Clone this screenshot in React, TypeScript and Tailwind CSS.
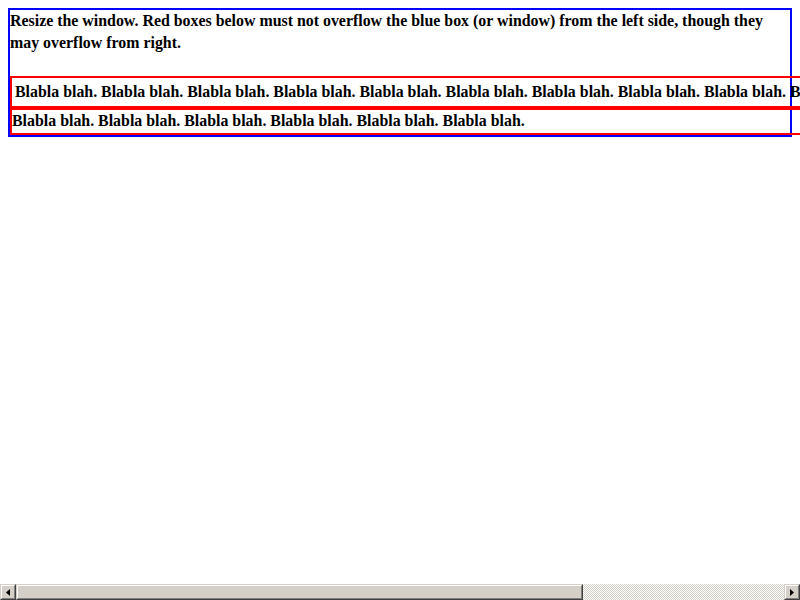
import React from "react";

const blah = (n: number) => Array.from({ length: n }, () => "Blabla blah.").join(" ");

function ScrollButton({ dir }: { dir: "left" | "right" }) {
  return (
    <div className="w-4 h-4 shrink-0 bg-[#d4d0c8] border border-t-[#d4d0c8] border-l-[#d4d0c8] border-r-[#404040] border-b-[#404040]">
      <div className="w-full h-full flex items-center justify-center border border-t-white border-l-white border-r-[#808080] border-b-[#808080]">
        <svg width="4" height="7" viewBox="0 0 4 7">
          {dir === "left" ? (
            <path d="M4 0 L0 3.5 L4 7 Z" fill="#000" />
          ) : (
            <path d="M0 0 L4 3.5 L0 7 Z" fill="#000" />
          )}
        </svg>
      </div>
    </div>
  );
}

export default function App() {
  return (
    <div className="w-[800px] h-[600px] flex flex-col bg-white overflow-hidden font-['Liberation_Serif','Times_New_Roman',serif] font-bold text-[15.9px] text-black">
      <div className="flex-1 overflow-hidden p-2">
        <div className="border-2 border-[#0000ff]">
          <p className="leading-[22px] mb-[22px]">
            Resize the window. Red boxes below must not overflow the blue box (or window) from the left side, though they may overflow from right.
          </p>
          <div className="w-[900px] border-2 border-[#ff0000] pl-[3px] py-[3px] leading-[22px] whitespace-nowrap">
            {blah(10)}
          </div>
          <div className="w-[900px] border-2 border-[#ff0000] pb-[2px] leading-[21px] whitespace-nowrap">
            {blah(6)}
          </div>
        </div>
      </div>
      <div className="h-4 flex shrink-0">
        <ScrollButton dir="left" />
        <div className="w-[567px] h-4 shrink-0 bg-[#d4d0c8] border border-t-[#d4d0c8] border-l-[#d4d0c8] border-r-[#404040] border-b-[#404040]">
          <div className="w-full h-full border border-t-white border-l-white border-r-[#808080] border-b-[#808080]" />
        </div>
        <div className="flex-1 bg-[repeating-conic-gradient(#d4d0c8_0_25%,#ffffff_0_50%)] bg-[length:2px_2px]" />
        <ScrollButton dir="right" />
      </div>
    </div>
  );
}
